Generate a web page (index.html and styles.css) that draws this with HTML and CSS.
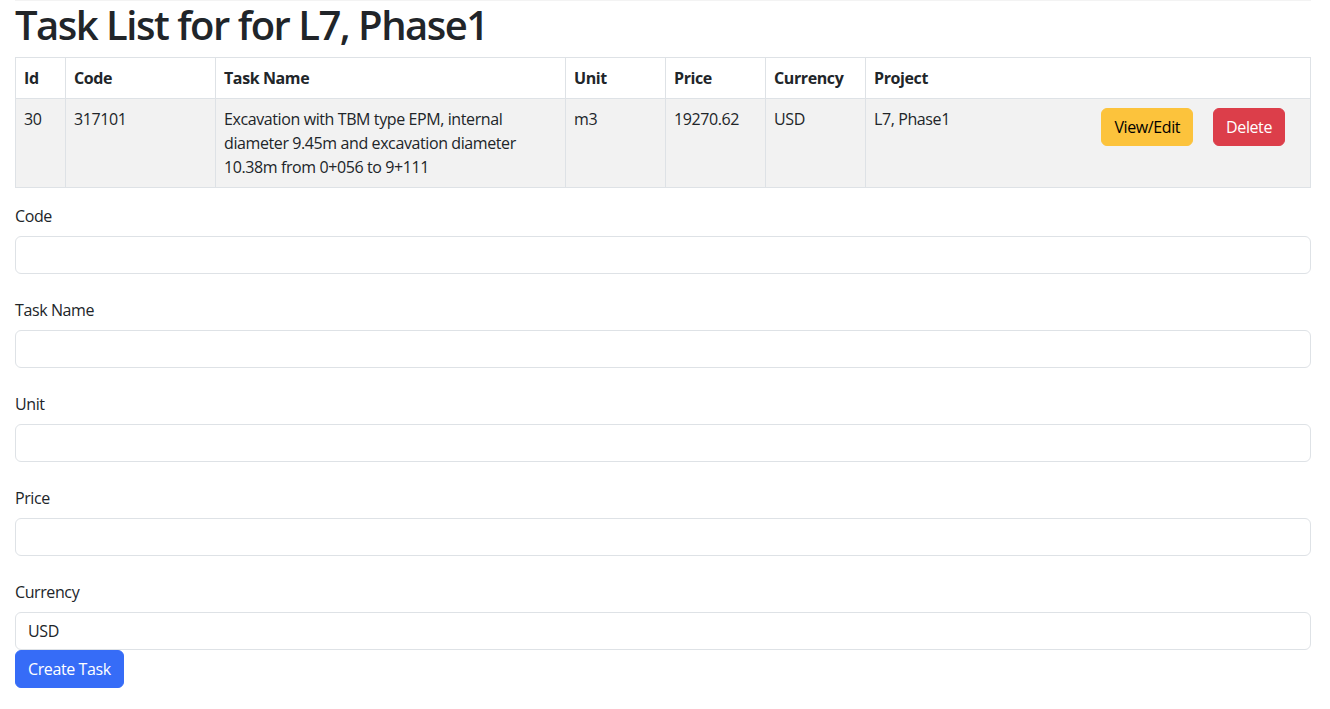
FILE: index.html
```html
<!DOCTYPE html>
<html lang="en">
<head>
<meta charset="utf-8">
<title>Task List</title>
<link rel="stylesheet" href="styles.css">
</head>
<body>
<div class="page">
  <h1 class="title">Task List for for L7, Phase1</h1>
  <table class="tasks">
    <colgroup>
      <col class="c-id"><col class="c-code"><col class="c-name"><col class="c-unit"><col class="c-price"><col class="c-cur"><col class="c-proj"><col>
    </colgroup>
    <thead>
      <tr>
        <th>Id</th><th>Code</th><th>Task Name</th><th>Unit</th><th>Price</th><th>Currency</th><th colspan="2">Project</th>
      </tr>
    </thead>
    <tbody>
      <tr>
        <td>30</td>
        <td>317101</td>
        <td>Excavation with TBM type EPM, internal diameter 9.45m and excavation diameter 10.38m from 0+056 to 9+111</td>
        <td>m3</td>
        <td>19270.62</td>
        <td>USD</td>
        <td class="proj">L7, Phase1</td>
        <td class="actions"><div class="btns"><button class="btn btn-warning">View/Edit</button><button class="btn btn-danger">Delete</button></div></td>
      </tr>
    </tbody>
  </table>
  <form class="task-form">
    <div class="field"><label>Code</label><input class="input" type="text"></div>
    <div class="field"><label>Task Name</label><input class="input" type="text"></div>
    <div class="field"><label>Unit</label><input class="input" type="text"></div>
    <div class="field"><label>Price</label><input class="input" type="text"></div>
    <div class="field last"><label>Currency</label><input class="input" type="text" value="USD"></div>
    <div><button type="button" class="btn btn-primary">Create Task</button></div>
  </form>
</div>
</body>
</html>
```
FILE: styles.css
```css
* { box-sizing: border-box; }
html, body { margin: 0; padding: 0; background: #fff; }
body {
  font-family: "Segoe UI", "Open Sans", "Noto Sans", sans-serif;
  font-size: 16px;
  line-height: 24px;
  letter-spacing: -0.4px;
  color: #212529;
}
.page {
  padding: 0 19px 0 15px;
}
.title {
  margin: 0 0 8px;
  border-top: 1px solid #f3f3f3;
  font-size: 40px;
  line-height: 48px;
  font-weight: 600;
  letter-spacing: -1.5px;
}
.tasks {
  width: 100%;
  border-collapse: collapse;
  table-layout: fixed;
  margin-bottom: 16px;
}
.c-id { width: 50px; }
.c-code { width: 150px; }
.c-name { width: 350px; }
.c-unit, .c-price, .c-cur { width: 100px; }
.c-proj { width: 200px; }
.tasks th, .tasks td {
  border: 1px solid #dee2e6;
  padding: 8px;
  text-align: left;
  vertical-align: top;
}
.tasks th { font-weight: 700; }
.tasks tbody tr { background: #f2f2f2; }
.tasks td.proj { border-right: none; }
.tasks td.actions { border-left: none; padding: 9px 25px 8px 8px; }
.btns { display: flex; justify-content: flex-end; gap: 20px; }
.btn {
  font-family: inherit;
  font-size: 16px;
  line-height: 24px;
  letter-spacing: -0.4px;
  padding: 6px 12px;
  border: 1px solid transparent;
  border-radius: 6px;
  cursor: pointer;
}
.btn-warning { background: #fcc33c; border-color: #fcc33c; color: #000; }
.btn-danger { background: #dc3e4a; border-color: #dc3e4a; color: #fff; }
.btn-primary { background: #366cf7; border-color: #366cf7; color: #fff; }
.task-form { display: flex; flex-direction: column; }
.field { display: flex; flex-direction: column; margin-bottom: 24px; }
.field.last { margin-bottom: 0; }
.field label { margin-bottom: 8px; }
.input {
  height: 38px;
  padding: 6px 12px;
  font-family: inherit;
  font-size: 16px;
  line-height: 24px;
  letter-spacing: -0.4px;
  color: #212529;
  border: 1px solid #dee2e6;
  border-radius: 6px;
  background: #fff;
}
```
